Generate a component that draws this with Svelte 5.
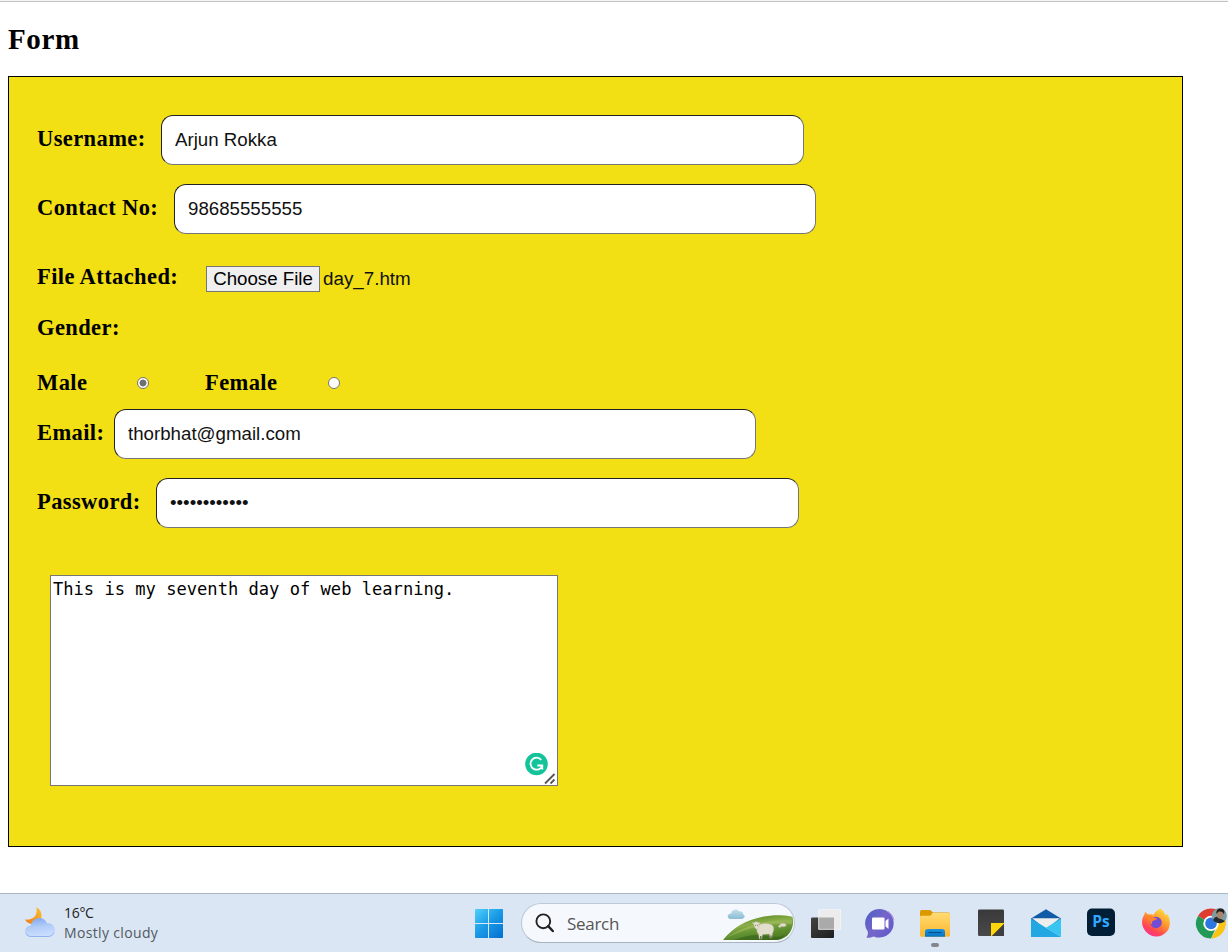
<script>
  let username = $state('Arjun Rokka');
  let contact = $state('98685555555');
  let email = $state('thorbhat@gmail.com');
  let password = $state('abcdefghijkl');
  let gender = $state('male');
  let message = $state('This is my seventh day of web learning.');
</script>

<main>
  <h1>Form</h1>
  <form>
    <div class="row"><label for="user" style:width="124px">Username:</label><input class="field" id="user" bind:value={username} /></div>
    <div class="row"><label for="contact" style:width="137px">Contact No:</label><input class="field narrow" id="contact" bind:value={contact} /></div>
    <div class="row file"><span class="label">File Attached:</span><button type="button">Choose File</button><span class="filename">day_7.htm</span></div>
    <div class="row gender"><span class="label">Gender:</span></div>
    <div class="row radios">
      <label for="male">Male</label><input id="male" type="radio" value="male" bind:group={gender} />
      <label for="female">Female</label><input id="female" type="radio" value="female" bind:group={gender} />
    </div>
    <div class="row"><label for="email" style:width="77px">Email:</label><input class="field narrow" id="email" bind:value={email} /></div>
    <div class="row"><label for="pass" style:width="119px">Password:</label><input class="field" id="pass" type="password" bind:value={password} /></div>
    <div class="message">
      <textarea bind:value={message} spellcheck="false" aria-label="Message"></textarea>
      <svg class="badge" width="23" height="23" viewBox="0 0 23 23"><circle cx="11.5" cy="11" r="11.3" fill="#15c39a" /><path d="M16.2 6.900A6 6 0 1 0 17.2 12.700M12.3 12.500h5v4" fill="none" stroke="#fff" stroke-width="1.8" /></svg>
      <svg class="grip" width="12" height="12" viewBox="0 0 12 12"><path d="M1 10.5 10.5 1M6.5 10.5l4-4" stroke="#555" stroke-width="1.8" fill="none" /></svg>
    </div>
  </form>
</main>

<footer>
  <div class="weather">
    <svg width="32" height="32" viewBox="0 0 32 32">
      <defs>
        <linearGradient id="moon" x1="1" y1="0" x2="0" y2="1"><stop stop-color="#fbc12d" /><stop offset="1" stop-color="#f17b1c" /></linearGradient>
        <linearGradient id="cloud" x1="0" y1="0" x2="0.2" y2="1"><stop stop-color="#7da4ea" /><stop offset=".55" stop-color="#b3cdf8" /><stop offset="1" stop-color="#c9ddff" /></linearGradient>
      </defs>
      <path d="M12.5 .5c2.800 1 5 4 5 8.300 0 5-4 8.200-8.700 8.200-3.500 0-6.500-1.700-7.700-4.500 5 .7 9-1 10.600-4.400 1-2.300 1.200-5 .8-7.600z" fill="url(#moon)" />
      <path d="M7.2 30c-3.6 0-6.2-2.500-6.200-5.600 0-3.200 2.500-5.500 5.700-5.600C7.500 14.200 11 11 15.300 11c3.700 0 6.500 2 7.800 5.200 4.500-.5 7.900 2.500 7.900 6.700 0 4.200-3 7.100-7 7.100z" fill="url(#cloud)" />
      <path d="M2 26.500c1.200 2.300 3 3 5.200 3H24c2.600 0 5-1.400 6-4" stroke="#83a7e8" fill="none" opacity=".8" />
    </svg>
    <div class="forecast"><span>16°C</span><span>Mostly cloudy</span></div>
  </div>

  <svg class="windows" width="30" height="30" viewBox="0 0 30 30">
    <defs><linearGradient id="win" gradientUnits="userSpaceOnUse" x1="0" y1="0" x2="28" y2="30"><stop stop-color="#55d4fd" /><stop offset=".5" stop-color="#1a9be6" /><stop offset="1" stop-color="#0570d1" /></linearGradient></defs>
    <path d="M1.500 1H14v14H1V1.500zM15 1h13.500l.5.500V15H15zM1 16h13v14H1.500l-.5-.5zM15 16h14v13.500l-.5.500H15z" fill="url(#win)" />
  </svg>

  <div class="search">
    <svg width="20" height="20" viewBox="0 0 20 20"><circle cx="8.300" cy="8.300" r="6.900" fill="none" stroke="#222" stroke-width="1.900" /><path d="m13.200 13.200 4.600 4.800" stroke="#222" stroke-width="2.500" stroke-linecap="round" /></svg>
    <span>Search</span>
    <svg class="scene" width="71" height="34" viewBox="0 0 71 34">
      <defs>
        <linearGradient id="hill" x1=".3" y1="0" x2=".7" y2="1"><stop stop-color="#568522" /><stop offset=".35" stop-color="#8bae47" /><stop offset=".65" stop-color="#629232" /><stop offset="1" stop-color="#49751e" /></linearGradient>
        <linearGradient id="mist" x1="0" y1="0" x2="0" y2="1"><stop stop-color="#c2dee9" /><stop offset="1" stop-color="#8bbdd3" /></linearGradient>
      </defs>
      <path d="M8.500 12c-5 0-5-5.200-.4-5.600C9 1.800 14.500 1.700 16 4.400c2.500-.4 4 .8 4 2.700 3 1.600 1.600 4.900-1.400 4.900z" fill="url(#mist)" />
      <path d="M0 33C12 17 34 7.500 58 8.300c4.500.2 8 .7 11.500 1.500C72 19 67 32 54 33z" fill="url(#hill)" />
      <path d="M3 31c16-11 36-18 66-18v4c-25-2-47 5-66 14z" fill="#a5bf62" opacity=".55" />
      <path d="M11 33c13-5 22-6 34-4s12 0 17-1c-3 3-5 5-9 5z" fill="#34611b" opacity=".6" />
      <g fill="#e2decd" stroke="#bcb79f" stroke-width=".4">
        <path d="M35 19c3-3.500 13-3.500 15 0 1.300 2.500.7 5.500-.6 7.500l-.5 4.500H47l-.5-4-7 .5-.7 4.500h-2.400l-.9-5c-2-2-2.300-5-.5-8z" />
        <path d="m29 15.500 2 .3c1-1.200 3-1.200 4.200-.2l2.300.2-1.600 1.800c.2 2.400-.6 4.600-2 4.700-1.500 0-2.800-2.500-3-4.700z" />
        <ellipse cx="60" cy="18" rx="3.200" ry="1.700" /><circle cx="56.800" cy="19.300" r="1.200" />
      </g>
      <path d="M37.800 29v3M48 28.500v2.500M32 18.300h.5M34.500 18.300h.5" stroke="#575344" stroke-width="1.200" />
    </svg>
  </div>

  <div class="apps">
    <svg viewBox="0 0 32 36">
      <defs><linearGradient id="dark" x1="0" y1="0" x2="1" y2="1"><stop stop-color="#444" /><stop offset="1" stop-color="#1d1d1d" /></linearGradient></defs>
      <rect x="2" y="12.500" width="23" height="20.500" rx="1" fill="url(#dark)" /><path d="M9.500 4.500h22.300v20H9.500z" fill="#ececec" /><path d="M9.500 12.500H25v12H9.500z" fill="#aaa" /><path d="M9.700 4.700h22v19.600h-22z" fill="none" stroke="#fff" stroke-width=".5" />
    </svg>
    <svg viewBox="0 0 32 36">
      <defs><linearGradient id="chat" x1=".15" y1=".2" x2="1" y2=".8"><stop stop-color="#5961c6" /><stop offset=".45" stop-color="#7666ca" /><stop offset="1" stop-color="#605ac7" /></linearGradient></defs>
      <path d="M16 4a14.300 14.300 0 1 1-6.300 27.400C7 32.500 4 33 2.500 32.500c1.300-2 1.500-3.500 1.400-5.800A14.300 14.300 0 0 1 16 4z" fill="url(#chat)" /><path d="M24 6.300a14 14 0 0 1 6 8.500" stroke="#b68be3" stroke-width="1" fill="none" /><rect x="8" y="12.500" width="12.500" height="12" rx="1" fill="#fff" /><path d="m21.500 16 3-2.500V24l-3-2.500z" fill="#fff" />
    </svg>
    <svg viewBox="0 0 32 36">
      <defs><linearGradient id="folder" x1="0" y1="0" x2="0" y2="1"><stop stop-color="#ffdb70" /><stop offset="1" stop-color="#fcb62d" /></linearGradient><linearGradient id="tray" x1="0" y1="0" x2="0" y2="1"><stop stop-color="#1b93df" /><stop offset="1" stop-color="#0774c2" /></linearGradient></defs>
      <path d="M1 13V6.500Q1 5 2.500 5h8q1 0 2 1l1.500 1.500h15Q31 7.500 31 9v5z" fill="#dc9800" /><path d="M1 12q0-1.200 1.200-1.200h8.300q1 0 2-1l.8-1.700H29.500Q31 8.100 31 9.600v21.100L30 31.700H2l-1-1z" fill="url(#folder)" /><path d="M6 31.700v-5q0-2.700 3-2.700h14q3 0 3 2.700v5z" fill="url(#tray)" /><path d="M9.500 27.500h13" stroke="#084f87" stroke-width="1.100" /><rect x="12" y="38" width="8" height="4" rx="2" fill="#82878e" />
    </svg>
    <svg viewBox="0 0 32 36"><defs><linearGradient id="note" x1="0" y1="0" x2="0" y2="1"><stop stop-color="#393939" /><stop offset="1" stop-color="#494949" /></linearGradient></defs><rect x="3" y="4.500" width="26" height="26.500" rx="1.200" fill="url(#note)" /><path d="M16 18h13v1L17 31h-1z" fill="#ffd60a" /><path d="m29 19-12 12h12z" fill="#3f3f3f" /></svg>
    <svg viewBox="0 0 32 36"><path d="m1 13.500 15-9.200 15 9.200v5H1z" fill="#105ca6" /><path d="M2 13.200h28L16 24z" fill="#eee" /><path d="M1 13.500 31 32H1z" fill="#21a7e2" /><path d="M16 22.700 31 13.500V32z" fill="#38c5f1" /></svg>
    <svg viewBox="0 0 32 36"><rect x="2" y="3.500" width="28" height="27.500" rx="5" fill="#001e36" /><text x="16" y="22" font-family="Open Sans, sans-serif" font-size="15.500" font-weight="700" fill="#31a8ff" text-anchor="middle">Ps</text></svg>
    <svg viewBox="0 0 32 36">
      <defs><linearGradient id="fox" x1=".8" y1="0" x2=".2" y2="1"><stop stop-color="#ffe443" /><stop offset=".4" stop-color="#ff9b2c" /><stop offset=".75" stop-color="#ff4553" /><stop offset="1" stop-color="#f72ea1" /></linearGradient></defs>
      <path d="M20.500 3.500c4 3 4.200 6 5.600 7l.6-2c4.300 5 4 13 .7 17.500a14 14 0 0 1-23-1.300C.7 19 2 12.500 4.400 9.800L5 7c1 .3 2.800 2 3 2.500 2-.5 4-.2 5.600.3 1.300-2.800 4-5 6.900-6.300z" fill="url(#fox)" /><circle cx="16" cy="17.500" r="5.800" fill="#744bd5" /><path d="M4 12c3-2.800 8-1.500 10 1l3 .3c-.5 2-2.600 2-4.400 2.700-.8 1.200-.8 2.500-.2 3.600-2-.2-2.800-2.500-1.800-4.300-2.400-.7-4.700-1.500-6.600-3.300z" fill="#ff812c" />
    </svg>
    <svg viewBox="0 0 32 36">
      <path d="M16 18.400 3 10.900A15 15 0 0 1 29 10.900z" fill="#df3c32" /><path d="M16 18.400h7l-7 15A15 15 0 0 1 3 10.900z" fill="#239957" /><path d="M16 18.400h14.700A15 15 0 0 1 16 33.400l6.500-11z" fill="#fac414" /><path d="M15 11h14a15 15 0 0 1 2 9H20z" fill="#fac414" /><circle cx="16" cy="18.400" r="7.700" fill="#fff" /><circle cx="16" cy="18.400" r="5.800" fill="#2b76df" />
      <circle cx="24.300" cy="10.700" r="7.500" fill="#7e9ba1" /><path d="M18 15q2-4 5-3l3 2 4 2c-3 3-9 3-12-1z" fill="#222b30" /><ellipse cx="25" cy="9.600" rx="3" ry="4.200" fill="#ae8467" /><path d="M21.500 9c-1-6 5-6.500 7-4.500 1.600 1.600.8 3.400.2 4.900-.3-3-3.700-3.200-5.600-2.500z" fill="#201e1c" />
    </svg>
  </div>
</footer>

<style>
  :global(body) { background: #fff; overflow: hidden; }
  main { box-sizing: border-box; height: 892px; padding: 20px 0 0 8px; border-top: 1px solid #c3c3c3; margin-top: 1px; box-shadow: 0 -1px #f5f5f5; }
  h1 { margin: 0; height: 54px; font: bold 29px/34px "Liberation Serif", serif; letter-spacing: .6px; color: #000; }
  form { box-sizing: border-box; width: 1175px; height: 771px; border: 1px solid #000; background: #f2df14; padding: 38px 28px 0; }
  .row { display: flex; align-items: center; height: 50px; margin-bottom: 19px; color: #000; }
  label, .label { flex: none; font: bold 22.500px/28px "Liberation Serif", serif; letter-spacing: .4px; white-space: nowrap; padding-bottom: 2px; }
  .field { box-sizing: border-box; width: 643px; height: 50px; margin: 0; padding: 0 13px; border: 1px solid; border-color: #222 #767676 #767676 #222; border-radius: 12px; outline: 0; background: #fff; font: 18.700px "Liberation Sans", sans-serif; color: #111; }
  .narrow { width: 642px; }
  .file { height: 51px; margin-bottom: 0; align-items: flex-start; padding-top: 10px; box-sizing: border-box; }
  .file .label { width: 169px; }
  button { box-sizing: border-box; margin: 3px 3px 0 0; width: 114px; height: 26px; padding: 0; border: 1px solid #767676; background: #efefef; font: 18.700px/22px "Liberation Sans", sans-serif; color: #000; }
  .filename { font: 18.800px/26px "Liberation Sans", sans-serif; padding-top: 3px; color: #111; }
  .gender { height: 50px; margin: 0; }
  .radios { height: 55px; margin: 0; padding-top: 2px; box-sizing: border-box; }
  .radios label { width: 100px; padding-bottom: 0; }
  .radios label:nth-of-type(2) { width: 123px; }
  .radios input { width: 12px; height: 12px; margin: 1px 56px 0 0; appearance: none; border: 1px solid #767676; border-radius: 50%; background: #fff; box-sizing: border-box; }
  .radios input:checked { background: radial-gradient(circle, #707070 0 3.200px, #fff 3.800px); }
  .message { position: relative; width: 508px; height: 211px; margin: 47px 0 0 13px; }
  textarea { display: block; box-sizing: border-box; width: 508px; height: 211px; margin: 0; border: 1px solid #767676; outline: 0; resize: none; background: #fff; padding: 2px; font: 17.100px/22px "DejaVu Sans Mono", monospace; color: #000; }
  .badge { position: absolute; left: 475px; top: 178px; }
  .grip { position: absolute; right: 2px; bottom: 1px; }
  footer { display: flex; align-items: center; box-sizing: border-box; height: 59px; border-top: 1px solid #aab6c3; background: #dae6f4; font-family: "Open Sans", sans-serif; overflow: hidden; }
  .weather { display: flex; width: 474px; padding-left: 24px; box-sizing: border-box; gap: 8px; align-items: center; flex: none; }
  .forecast { display: flex; flex-direction: column; font-size: 14px; line-height: 20px; color: #222; }
  .forecast span:last-child { color: #525960; letter-spacing: .35px; }
  .forecast span:first-child { letter-spacing: -.3px; }
  .windows { flex: none; }
  .search { position: relative; flex: none; display: flex; align-items: center; box-sizing: border-box; width: 274px; height: 40px; margin-left: 17px; padding-left: 13px; gap: 12px; border: 1px solid #bdc9d9; border-bottom-color: #a9b3c1; border-radius: 20px; background: #f5f9fd; overflow: hidden; color: #555; font-size: 17px; }
  .search span { letter-spacing: -.3px; }
  .scene { position: absolute; right: 0; bottom: 1px; }
  .apps { display: flex; flex: none; gap: 23.200px; margin-left: 14px; }
  .apps svg { width: 32px; height: 36px; flex: none; overflow: visible; }
</style>
